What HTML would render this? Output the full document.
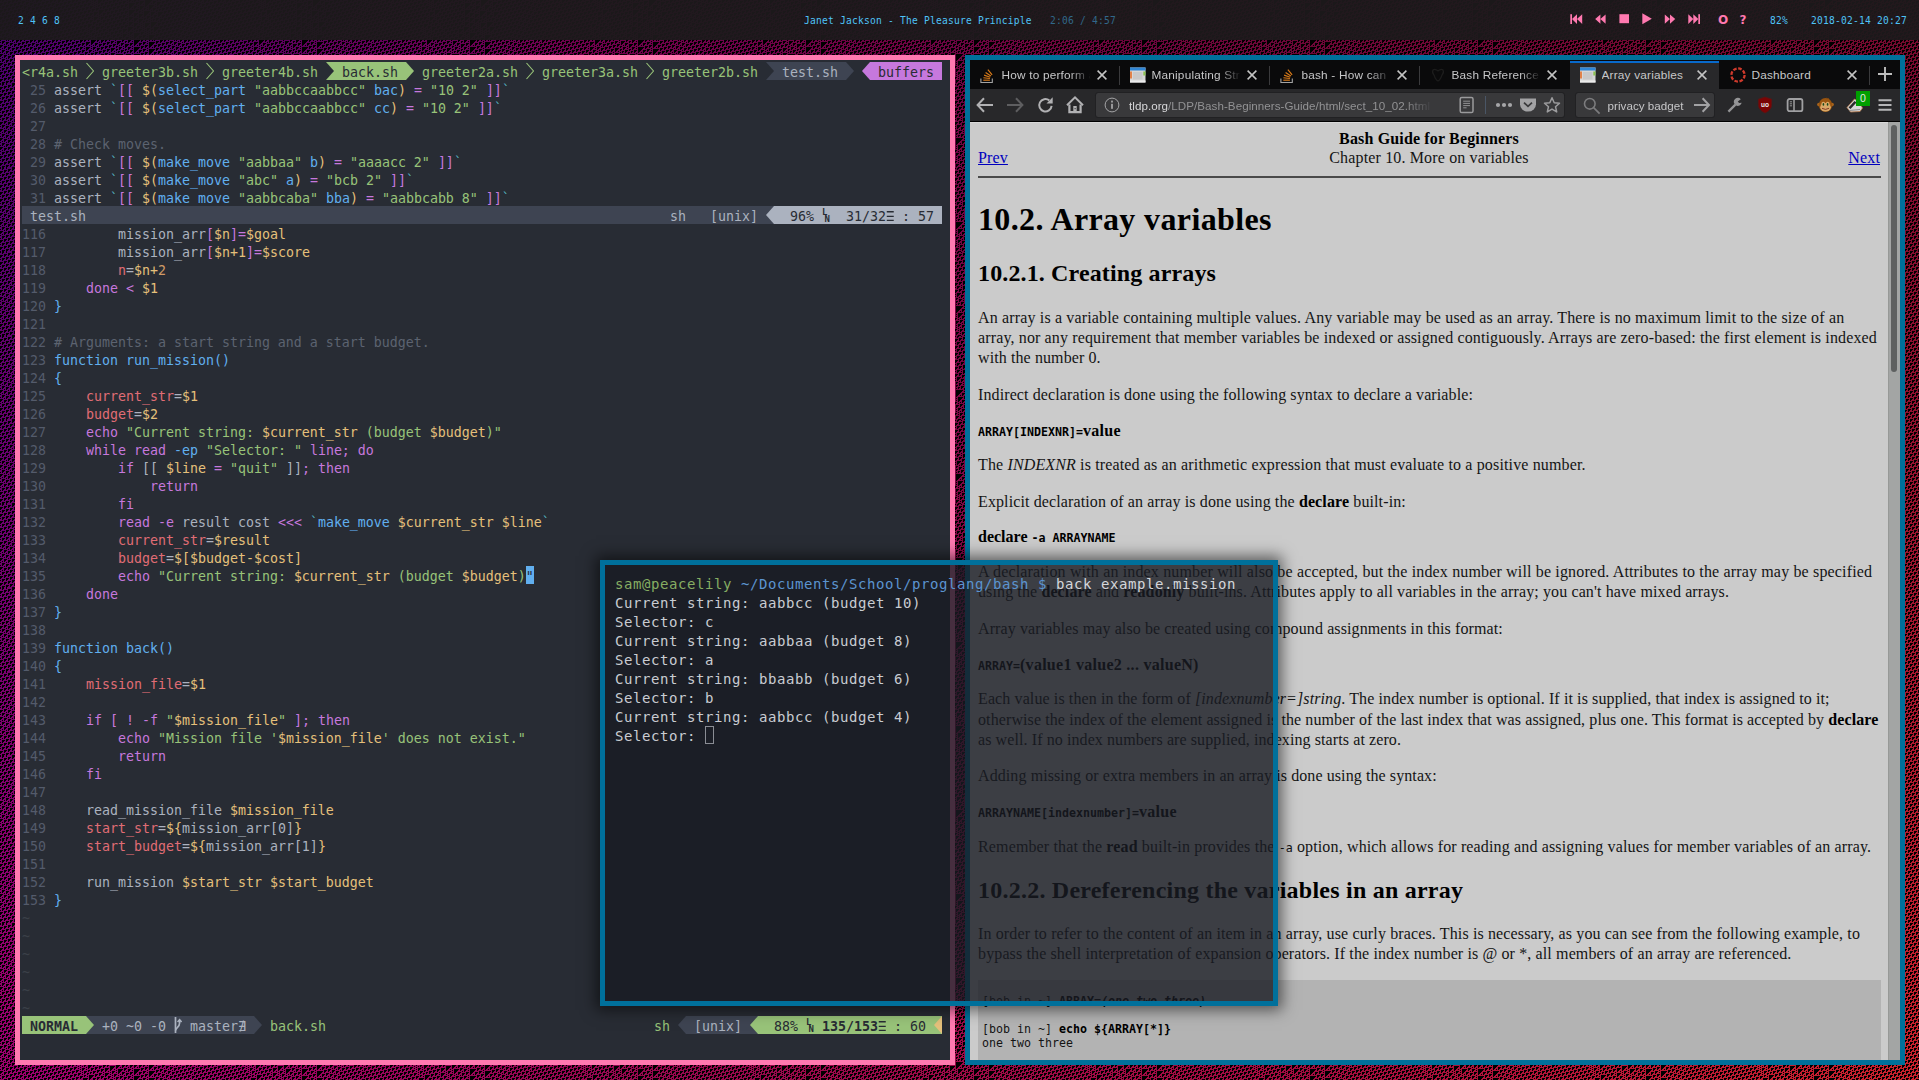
<!DOCTYPE html>
<html lang="en">
<head>
<meta charset="utf-8">
<title>desktop</title>
<style>
*{box-sizing:border-box;margin:0;padding:0}
html,body{width:1919px;height:1080px;overflow:hidden;background:#000}
body{position:relative;font-family:"Liberation Sans",sans-serif}
#wall{position:absolute;left:0;top:0;shape-rendering:crispEdges}
.abs{position:absolute}
/* top bar */
#bar{position:absolute;left:0;top:0;width:1919px;height:40px;background:rgba(29,25,28,.94);font-family:"DejaVu Sans Mono","Liberation Mono",monospace;font-size:9.6px;letter-spacing:.22px;line-height:12px;white-space:pre}
#bar span{position:absolute;top:14.5px}
#bar .ob{font:bold 12px/12px "DejaVu Sans","Liberation Sans",sans-serif;letter-spacing:0;top:13.5px}
.bl{color:#4fc3f7}.dbl{color:#31688a}.pk{color:#ff79b0}
/* windows */
#vim{position:absolute;left:15px;top:55px;width:940px;height:1010px;border:5px solid #ff79b0;background:#282c34;overflow:hidden}
#ff{position:absolute;left:965px;top:55px;width:940px;height:1010px;border:5px solid #00709b;background:#cbcbcb;overflow:hidden}
#term{position:absolute;left:600px;top:560px;width:678px;height:446px;border:5px solid #00709b;background:rgba(27,29,38,.83);box-shadow:0 0 14px 4px rgba(0,0,0,.55);overflow:hidden}
/* vim */
#vim{font-family:"DejaVu Sans Mono","Liberation Mono",monospace;font-size:13.29px;color:#abb2bf}
.vl{position:absolute;left:2px;height:20px;padding-top:2px;line-height:18px;white-space:pre}
.bx{position:absolute;height:18px}
.n{color:#545b6b}.p{color:#c678dd}.y{color:#e5c07b}.g{color:#98c379}.b{color:#61afef}.r{color:#e06c75}.c{color:#56b6c2}.o{color:#d19a66}.m{color:#5c6370}
.cur{color:#282c34}
.tg{color:#98c379}.dk{color:#282c34}.bd{font-weight:bold}
.til{color:#3b4048}
.sym{font-family:"DejaVu Sans","DejaVu Sans Mono",sans-serif}
.tri{transform:scaleX(.72);transform-origin:0 50%}
.lnsym{position:absolute;width:8px;height:18px;font:bold 9px/8px "DejaVu Sans Mono",monospace}
.lnsym i{position:absolute;left:0;top:1.5px;font-style:normal}
.lnsym b{position:absolute;left:2.6px;top:8.5px}
/* firefox */
#ff{font-family:"Liberation Sans",sans-serif;font-size:11.6px;color:#c7c7c8}
.tabs{position:absolute;left:0;top:0;width:930px;height:29px;background:#0a0a0b}
.tab{position:absolute;top:0;width:150px;height:29px}
.tab.act{background:#28282a;width:149px;box-shadow:inset 0 1px 0 #0a0a0b}
.tab.act:before{content:"";position:absolute;left:0;top:1px;width:100%;height:2px;background:#086acc}
.fav{position:absolute;left:10px;top:6.8px;width:16px;height:16px}
.tt{position:absolute;left:31.5px;top:6.5px;height:16px;line-height:16px;width:90px;white-space:nowrap;overflow:hidden;letter-spacing:.2px;font-size:11.8px}
.tt.fd{-webkit-mask-image:linear-gradient(90deg,#000 68px,transparent 89px);mask-image:linear-gradient(90deg,#000 68px,transparent 89px)}
.tx{position:absolute;left:127px;top:10px;width:10px;height:10px}
.tsep{position:absolute;top:5.5px;width:1px;height:19px;background:#3a3a3c}
.nav{position:absolute;left:0;top:29px;width:930px;height:33px;background:#28282a;border-bottom:1px solid #000}
.nav{height:33px}
.ubar{position:absolute;top:4px;height:24px;background:#39393b;border-radius:2.5px;box-shadow:0 0 0 1px rgba(20,20,22,.35)}
.ut{position:absolute;left:33px;top:3.5px;line-height:18px;white-space:nowrap;color:#929294;letter-spacing:.05px;width:322px;overflow:hidden;-webkit-mask-image:linear-gradient(90deg,#000 276px,transparent 304px);mask-image:linear-gradient(90deg,#000 276px,transparent 304px)}
.ut b{font-weight:normal;color:#d6d6d8}
.badge{position:absolute;left:886px;top:2px;width:14px;height:15px;background:#00a000;color:#e4e4e4;font-size:10.5px;line-height:15px;text-align:center}
.page{position:absolute;left:0;top:62px;width:930px;height:938px;background:#cbcbcb;box-shadow:inset 0 1px 0 #d9d9d9}
.page{font-family:"Liberation Serif",serif;font-size:16px;color:#141414}
.page b,.h1,.h2{color:#000}
.sb{position:absolute;left:918px;top:0;width:12px;height:938px;background:#a3a5a4;box-shadow:inset 1px 0 0 #979997}
.sb i{position:absolute;left:3px;top:3px;width:6px;height:247px;border-radius:3px;background:#5e6060}
.ln{position:absolute;white-space:nowrap;line-height:20px;letter-spacing:.15px;margin-top:-62px}
.ln a{color:#0000be;text-decoration:underline}
.h1{font-size:32px;font-weight:bold;line-height:40px;letter-spacing:.34px}
.h2{font-size:24px;font-weight:bold;line-height:30px;letter-spacing:.18px}
.mo{font-family:"DejaVu Sans Mono","Liberation Mono",monospace;font-size:11.63px;letter-spacing:0 !important}
.pre{font-family:"DejaVu Sans Mono","Liberation Mono",monospace;font-size:11.63px;letter-spacing:0;line-height:14px}
.hr{position:absolute;left:8px;top:54px;width:903px;height:1.5px;background:#4a4a4a}
.preb{position:absolute;left:8px;top:858px;width:903px;height:80px;background:#b3b3b3}
/* terminal */
#term{background:rgba(25,27,35,.805);font-family:"DejaVu Sans Mono","Liberation Mono",monospace;font-size:14px;letter-spacing:.572px;color:#c9ccd2}
.tl{position:absolute;left:10px;margin-top:9.5px;height:19px;line-height:19px;white-space:pre}
.tg2{color:#86ad62}.tb2{color:#5b94d0}.tw2{color:#d4d6da}
.tcur{position:absolute;left:100px;top:161px;width:9px;height:18px;border:1px solid #8a8d94}

</style>
</head>
<body>
<svg id="wall" width="1919" height="1080">
<defs>
<linearGradient id="wg" gradientUnits="userSpaceOnUse" x1="0" y1="0" x2="1919" y2="1080">
<stop offset="0" stop-color="#6a0098"/><stop offset="0.24" stop-color="#9c006c"/><stop offset="0.5" stop-color="#96084e"/><stop offset="0.76" stop-color="#a40c40"/><stop offset="1" stop-color="#cc222c"/>
</linearGradient>
<linearGradient id="wv" x1="0" y1="0" x2="0" y2="1"><stop offset="0" stop-color="#000" stop-opacity=".3"/><stop offset="1" stop-color="#000" stop-opacity="0"/></linearGradient>
<pattern id="r110" width="168" height="84" patternUnits="userSpaceOnUse"><path stroke="#000" stroke-width="1" fill="none" d="M0 0.5h1m1 0h2m2 0h1m5 0h3m1 0h2m2 0h1m5 0h1m1 0h1m3 0h2m2 0h3m1 0h2m2 0h1m5 0h3m1 0h2m2 0h3m1 0h2m2 0h1m5 0h3m1 0h2m2 0h1m5 0h3m3 0h1m1 0h2m2 0h4m1 0h2m2 0h1m5 0h3m1 0h2m2 0h1m5 0h1m1 0h2m3 0h2m2 0h1m6 0h7m5 0h1m2 0h1m5 0h2M2 1.5h1m5 0h3m1 0h2m2 0h1m5 0h3m5 0h1m1 0h1m3 0h2m2 0h1m5 0h3m1 0h2m2 0h1m3 0h2m2 0h1m5 0h3m1 0h2m2 0h1m5 0h3m1 0h2m2 0h1m3 0h1m3 0h3m2 0h1m5 0h3m1 0h2m2 0h1m5 0h3m3 0h1m2 0h1m1 0h1m5 0h4m1 0h6m2 0h3m6 0h3m1 0h2M4 2.5h3m1 0h2m2 0h1m5 0h3m1 0h2m2 0h3m5 0h1m1 0h1m5 0h3m1 0h2m2 0h1m5 0h1m1 0h1m5 0h3m1 0h2m2 0h1m5 0h3m1 0h2m2 0h1m5 0h1m3 0h1m1 0h2m5 0h3m1 0h2m2 0h1m5 0h3m1 0h2m2 0h1m8 0h3m1 0h3m2 0h5m3 0h2m2 0h4m1 0h2m2 0h1M0 3.5h3m1 0h2m2 0h1m5 0h3m1 0h2m2 0h1m3 0h2m2 0h3m5 0h3m1 0h2m2 0h1m5 0h3m5 0h3m1 0h2m2 0h1m5 0h3m1 0h2m2 0h1m5 0h3m3 0h1m3 0h1m2 0h3m1 0h2m2 0h1m5 0h3m1 0h2m2 0h1m5 0h6m1 0h2m2 0h2m3 0h4m2 0h1m1 0h1m3 0h3m2 0h1M0 4.5h2m2 0h1m5 0h3m1 0h2m2 0h1m5 0h1m1 0h1m3 0h2m2 0h3m1 0h2m2 0h1m5 0h3m1 0h2m2 0h3m1 0h2m2 0h1m5 0h3m1 0h2m2 0h1m5 0h3m1 0h2m2 0h1m3 0h1m4 0h2m2 0h1m5 0h3m1 0h2m2 0h1m5 0h3m1 0h5m2 0h1m3 0h1m2 0h1m1 0h3m7 0h1m1 0h2m5 0h3M0 5.5h1m5 0h3m1 0h2m2 0h1m5 0h3m5 0h1m1 0h1m3 0h2m2 0h1m5 0h3m1 0h2m2 0h1m3 0h2m2 0h1m5 0h3m1 0h2m2 0h1m5 0h3m1 0h2m2 0h1m5 0h1m3 0h2m1 0h1m5 0h3m1 0h2m2 0h1m5 0h3m1 0h2m2 0h4m5 0h1m6 0h2m2 0h5m3 0h1m2 0h3m1 0h2M2 6.5h3m1 0h2m2 0h1m5 0h3m1 0h2m2 0h3m5 0h1m1 0h1m5 0h3m1 0h2m2 0h1m5 0h1m1 0h1m5 0h3m1 0h2m2 0h1m5 0h3m1 0h2m2 0h1m5 0h3m3 0h1m1 0h1m4 0h3m1 0h2m2 0h1m5 0h3m1 0h2m2 0h1m3 0h3m2 0h3m3 0h4m1 0h1m3 0h4m2 0h1m4 0h2m2 0h1M0 7.5h1m1 0h2m2 0h1m5 0h3m1 0h2m2 0h1m3 0h2m2 0h3m5 0h3m1 0h2m2 0h1m5 0h3m5 0h3m1 0h2m2 0h1m5 0h3m1 0h2m2 0h1m5 0h3m1 0h2m2 0h1m5 0h2m1 0h2m2 0h1m5 0h3m1 0h2m2 0h1m5 0h1m1 0h2m3 0h2m2 0h1m1 0h3m4 0h1m1 0h3m5 0h2m1 0h1m5 0h2M2 8.5h1m5 0h3m1 0h2m2 0h1m5 0h1m1 0h1m3 0h2m2 0h3m1 0h2m2 0h1m5 0h3m1 0h2m2 0h3m1 0h2m2 0h1m5 0h3m1 0h2m2 0h1m5 0h3m1 0h2m2 0h1m5 0h3m1 0h1m2 0h1m5 0h3m1 0h2m2 0h1m5 0h3m3 0h1m2 0h1m1 0h1m5 0h2m2 0h2m3 0h2m2 0h3m1 0h1m4 0h3m1 0h2M4 9.5h3m1 0h2m2 0h1m5 0h3m5 0h1m1 0h1m3 0h2m2 0h1m5 0h3m1 0h2m2 0h1m3 0h2m2 0h1m5 0h3m1 0h2m2 0h1m5 0h3m1 0h2m2 0h1m5 0h3m1 0h2m7 0h3m1 0h2m2 0h1m5 0h3m1 0h2m2 0h1m8 0h3m1 0h1m3 0h1m2 0h1m1 0h1m3 0h2m4 0h2m1 0h2m2 0h1M0 10.5h3m1 0h2m2 0h1m5 0h3m1 0h2m2 0h3m5 0h1m1 0h1m5 0h3m1 0h2m2 0h1m5 0h1m1 0h1m5 0h3m1 0h2m2 0h1m5 0h3m1 0h2m2 0h1m5 0h3m1 0h2m2 0h1m2 0h5m1 0h2m2 0h1m5 0h3m1 0h2m2 0h1m5 0h6m1 0h2m4 0h1m8 0h1m1 0h1m2 0h2m1 0h1m2 0h1M0 11.5h2m2 0h1m5 0h3m1 0h2m2 0h1m3 0h2m2 0h3m5 0h3m1 0h2m2 0h1m5 0h3m5 0h3m1 0h2m2 0h1m5 0h3m1 0h2m2 0h1m5 0h3m1 0h2m2 0h1m6 0h4m2 0h1m5 0h3m1 0h2m2 0h1m5 0h3m1 0h5m2 0h1m2 0h2m3 0h6m6 0h1m7 0h3M0 12.5h1m5 0h3m1 0h2m2 0h1m5 0h1m1 0h1m3 0h2m2 0h3m1 0h2m2 0h1m5 0h3m1 0h2m2 0h3m1 0h2m2 0h1m5 0h3m1 0h2m2 0h1m5 0h3m1 0h2m2 0h1m5 0h4m1 0h3m5 0h3m1 0h2m2 0h1m5 0h3m1 0h2m2 0h4m6 0h1m2 0h1m1 0h5m2 0h4m3 0h5m1 0h2M2 13.5h3m1 0h2m2 0h1m5 0h3m5 0h1m1 0h1m3 0h2m2 0h1m5 0h3m1 0h2m2 0h1m3 0h2m2 0h1m5 0h3m1 0h2m2 0h1m5 0h3m1 0h2m2 0h1m5 0h3m1 0h3m2 0h2m2 0h3m1 0h2m2 0h1m5 0h3m1 0h2m2 0h1m3 0h3m2 0h4m6 0h4m3 0h3m2 0h1m1 0h4m2 0h1M0 14.5h1m1 0h2m2 0h1m5 0h3m1 0h2m2 0h3m5 0h1m1 0h1m5 0h3m1 0h2m2 0h1m5 0h1m1 0h1m5 0h3m1 0h2m2 0h1m5 0h3m1 0h2m2 0h1m5 0h3m1 0h2m2 0h2m3 0h1m3 0h2m2 0h1m5 0h3m1 0h2m2 0h1m5 0h1m1 0h2m3 0h3m2 0h4m1 0h3m2 0h1m1 0h2m5 0h3m5 0h2M2 15.5h1m5 0h3m1 0h2m2 0h1m3 0h2m2 0h3m5 0h3m1 0h2m2 0h1m5 0h3m5 0h3m1 0h2m2 0h1m5 0h3m1 0h2m2 0h1m5 0h3m1 0h2m2 0h1m3 0h1m2 0h1m3 0h1m1 0h1m5 0h3m1 0h2m2 0h1m5 0h3m3 0h1m2 0h1m1 0h2m3 0h3m2 0h2m5 0h1m2 0h3m1 0h2m2 0h3m1 0h2M4 16.5h3m1 0h2m2 0h1m5 0h1m1 0h1m3 0h2m2 0h3m1 0h2m2 0h1m5 0h3m1 0h2m2 0h3m1 0h2m2 0h1m5 0h3m1 0h2m2 0h1m5 0h3m1 0h2m2 0h1m5 0h1m6 0h1m5 0h3m1 0h2m2 0h1m5 0h3m1 0h2m2 0h1m6 0h1m2 0h1m1 0h2m3 0h1m2 0h3m4 0h2m2 0h1m3 0h2m2 0h1M0 17.5h3m1 0h2m2 0h1m5 0h3m5 0h1m1 0h1m3 0h2m2 0h1m5 0h3m1 0h2m2 0h1m3 0h2m2 0h1m5 0h3m1 0h2m2 0h1m5 0h3m1 0h2m2 0h1m5 0h3m3 0h4m3 0h3m1 0h2m2 0h1m5 0h3m1 0h2m2 0h1m5 0h4m6 0h1m2 0h1m4 0h2m2 0h2m1 0h1m5 0h1m1 0h1M0 18.5h2m2 0h1m5 0h3m1 0h2m2 0h3m5 0h1m1 0h1m5 0h3m1 0h2m2 0h1m5 0h1m1 0h1m5 0h3m1 0h2m2 0h1m5 0h3m1 0h2m2 0h1m5 0h3m1 0h2m2 0h1m1 0h3m2 0h1m1 0h2m2 0h1m5 0h3m1 0h2m2 0h1m5 0h3m1 0h3m2 0h4m6 0h2m1 0h1m3 0h1m4 0h3m5 0h3M0 19.5h1m5 0h3m1 0h2m2 0h1m3 0h2m2 0h3m5 0h3m1 0h2m2 0h1m5 0h3m5 0h3m1 0h2m2 0h1m5 0h3m1 0h2m2 0h1m5 0h3m1 0h2m2 0h1m5 0h2m5 0h1m5 0h3m1 0h2m2 0h1m5 0h3m1 0h2m2 0h2m3 0h3m2 0h4m1 0h1m4 0h1m3 0h2m1 0h2m2 0h3m1 0h2M2 20.5h3m1 0h2m2 0h1m5 0h1m1 0h1m3 0h2m2 0h3m1 0h2m2 0h1m5 0h3m1 0h2m2 0h3m1 0h2m2 0h1m5 0h3m1 0h2m2 0h1m5 0h3m1 0h2m2 0h1m5 0h3m1 0h1m2 0h3m3 0h3m1 0h2m2 0h1m5 0h3m1 0h2m2 0h1m3 0h1m2 0h1m1 0h2m3 0h3m4 0h2m3 0h1m1 0h1m2 0h1m3 0h2m2 0h1M0 21.5h1m1 0h2m2 0h1m5 0h3m5 0h1m1 0h1m3 0h2m2 0h1m5 0h3m1 0h2m2 0h1m3 0h2m2 0h1m5 0h3m1 0h2m2 0h1m5 0h3m1 0h2m2 0h1m5 0h3m1 0h2m5 0h2m2 0h1m1 0h2m2 0h1m5 0h3m1 0h2m2 0h1m5 0h1m6 0h1m2 0h1m1 0h2m2 0h2m1 0h1m2 0h1m8 0h1m1 0h1m5 0h2M2 22.5h1m5 0h3m1 0h2m2 0h3m5 0h1m1 0h1m5 0h3m1 0h2m2 0h1m5 0h1m1 0h1m5 0h3m1 0h2m2 0h1m5 0h3m1 0h2m2 0h1m5 0h3m1 0h2m2 0h1m2 0h3m1 0h1m5 0h1m5 0h3m1 0h2m2 0h1m5 0h3m3 0h4m6 0h1m3 0h1m7 0h6m5 0h3m1 0h2M4 23.5h3m1 0h2m2 0h1m3 0h2m2 0h3m5 0h3m1 0h2m2 0h1m5 0h3m5 0h3m1 0h2m2 0h1m5 0h3m1 0h2m2 0h1m5 0h3m1 0h2m2 0h1m6 0h2m4 0h3m3 0h3m1 0h2m2 0h1m5 0h3m1 0h2m2 0h1m1 0h3m2 0h4m3 0h1m3 0h5m1 0h5m2 0h3m1 0h2m2 0h1M0 24.5h3m1 0h2m2 0h1m5 0h1m1 0h1m3 0h2m2 0h3m1 0h2m2 0h1m5 0h3m1 0h2m2 0h3m1 0h2m2 0h1m5 0h3m1 0h2m2 0h1m5 0h3m1 0h2m2 0h1m5 0h4m1 0h1m2 0h2m1 0h2m2 0h1m1 0h2m2 0h1m5 0h3m1 0h2m2 0h1m5 0h2m3 0h3m2 0h1m3 0h1m1 0h4m2 0h4m3 0h2m2 0h1M0 25.5h2m2 0h1m5 0h3m5 0h1m1 0h1m3 0h2m2 0h1m5 0h3m1 0h2m2 0h1m3 0h2m2 0h1m5 0h3m1 0h2m2 0h1m5 0h3m1 0h2m2 0h1m5 0h3m1 0h3m5 0h1m2 0h1m5 0h1m5 0h3m1 0h2m2 0h1m5 0h3m1 0h1m2 0h1m1 0h2m5 0h1m3 0h3m3 0h3m2 0h1m1 0h1m5 0h3M0 26.5h1m5 0h3m1 0h2m2 0h3m5 0h1m1 0h1m5 0h3m1 0h2m2 0h1m5 0h1m1 0h1m5 0h3m1 0h2m2 0h1m5 0h3m1 0h2m2 0h1m5 0h3m1 0h2m2 0h2m2 0h3m6 0h3m3 0h3m1 0h2m2 0h1m5 0h3m1 0h2m7 0h1m2 0h3m3 0h1m1 0h2m2 0h1m1 0h2m7 0h3m1 0h2M2 27.5h3m1 0h2m2 0h1m3 0h2m2 0h3m5 0h3m1 0h2m2 0h1m5 0h3m5 0h3m1 0h2m2 0h1m5 0h3m1 0h2m2 0h1m5 0h3m1 0h2m2 0h1m3 0h1m3 0h2m2 0h4m1 0h2m2 0h1m1 0h2m2 0h1m5 0h3m1 0h2m2 0h1m2 0h5m4 0h2m2 0h1m3 0h1m5 0h1m2 0h5m1 0h2m2 0h1M0 28.5h1m1 0h2m2 0h1m5 0h1m1 0h1m3 0h2m2 0h3m1 0h2m2 0h1m5 0h3m1 0h2m2 0h3m1 0h2m2 0h1m5 0h3m1 0h2m2 0h1m5 0h3m1 0h2m2 0h1m5 0h1m3 0h1m1 0h1m3 0h3m2 0h1m5 0h1m5 0h3m1 0h2m2 0h1m6 0h4m2 0h2m1 0h1m5 0h1m3 0h3m4 0h4m2 0h1m5 0h2M2 29.5h1m5 0h3m5 0h1m1 0h1m3 0h2m2 0h1m5 0h3m1 0h2m2 0h1m3 0h2m2 0h1m5 0h3m1 0h2m2 0h1m5 0h3m1 0h2m2 0h1m5 0h3m3 0h1m5 0h1m1 0h2m5 0h3m3 0h3m1 0h2m2 0h1m5 0h4m1 0h3m3 0h1m4 0h3m3 0h1m1 0h2m2 0h2m1 0h3m5 0h3m1 0h2M4 30.5h3m1 0h2m2 0h3m5 0h1m1 0h1m5 0h3m1 0h2m2 0h1m5 0h1m1 0h1m5 0h3m1 0h2m2 0h1m5 0h3m1 0h2m2 0h1m5 0h3m1 0h2m2 0h1m3 0h3m3 0h1m2 0h3m1 0h2m2 0h1m1 0h2m2 0h1m5 0h3m1 0h3m2 0h2m2 0h1m3 0h2m1 0h2m2 0h1m3 0h1m3 0h1m2 0h2m2 0h3m1 0h2m2 0h1M0 31.5h3m1 0h2m2 0h1m3 0h2m2 0h3m5 0h3m1 0h2m2 0h1m5 0h3m5 0h3m1 0h2m2 0h1m5 0h3m1 0h2m2 0h1m5 0h3m1 0h2m2 0h1m5 0h1m1 0h2m2 0h1m4 0h2m2 0h1m5 0h1m5 0h3m1 0h2m2 0h2m3 0h1m5 0h1m1 0h1m2 0h1m5 0h1m3 0h1m4 0h1m3 0h2m2 0h1M0 32.5h2m2 0h1m5 0h1m1 0h1m3 0h2m2 0h3m1 0h2m2 0h1m5 0h3m1 0h2m2 0h3m1 0h2m2 0h1m5 0h3m1 0h2m2 0h1m5 0h3m1 0h2m2 0h1m5 0h3m3 0h1m5 0h2m1 0h1m5 0h3m3 0h3m1 0h2m2 0h1m3 0h1m2 0h1m3 0h3m8 0h3m3 0h1m3 0h2m3 0h1m1 0h1m5 0h3M0 33.5h1m5 0h3m5 0h1m1 0h1m3 0h2m2 0h1m5 0h3m1 0h2m2 0h1m3 0h2m2 0h1m5 0h3m1 0h2m2 0h1m5 0h3m1 0h2m2 0h1m5 0h3m1 0h2m2 0h1m3 0h3m1 0h1m4 0h3m1 0h2m2 0h1m1 0h2m2 0h1m5 0h1m6 0h1m1 0h2m2 0h6m1 0h2m2 0h1m3 0h1m1 0h1m2 0h1m5 0h3m1 0h2M2 34.5h3m1 0h2m2 0h3m5 0h1m1 0h1m5 0h3m1 0h2m2 0h1m5 0h1m1 0h1m5 0h3m1 0h2m2 0h1m5 0h3m1 0h2m2 0h1m5 0h3m1 0h2m2 0h1m5 0h1m1 0h2m4 0h2m1 0h2m2 0h1m5 0h1m5 0h3m3 0h4m3 0h1m3 0h5m2 0h1m5 0h1m8 0h3m1 0h2m2 0h1M0 35.5h1m1 0h2m2 0h1m3 0h2m2 0h3m5 0h3m1 0h2m2 0h1m5 0h3m5 0h3m1 0h2m2 0h1m5 0h3m1 0h2m2 0h1m5 0h3m1 0h2m2 0h1m5 0h3m3 0h1m2 0h2m1 0h1m2 0h1m5 0h3m3 0h3m1 0h2m2 0h1m1 0h3m2 0h1m3 0h1m1 0h4m5 0h3m3 0h6m1 0h2m2 0h1m5 0h2M2 36.5h1m5 0h1m1 0h1m3 0h2m2 0h3m1 0h2m2 0h1m5 0h3m1 0h2m2 0h3m1 0h2m2 0h1m5 0h3m1 0h2m2 0h1m5 0h3m1 0h2m2 0h1m5 0h3m1 0h2m2 0h1m4 0h1m7 0h3m1 0h2m2 0h1m1 0h2m2 0h1m5 0h2m5 0h1m3 0h3m2 0h3m1 0h2m2 0h1m1 0h5m2 0h1m5 0h3m1 0h2M4 37.5h3m5 0h1m1 0h1m3 0h2m2 0h1m5 0h3m1 0h2m2 0h1m3 0h2m2 0h1m5 0h3m1 0h2m2 0h1m5 0h3m1 0h2m2 0h1m5 0h3m1 0h2m2 0h1m5 0h2m3 0h5m1 0h2m2 0h1m5 0h1m5 0h3m1 0h1m2 0h3m3 0h1m1 0h2m3 0h2m2 0h1m5 0h4m5 0h3m1 0h2m2 0h1M0 38.5h3m1 0h2m2 0h3m5 0h1m1 0h1m5 0h3m1 0h2m2 0h1m5 0h1m1 0h1m5 0h3m1 0h2m2 0h1m5 0h3m1 0h2m2 0h1m5 0h3m1 0h2m2 0h1m5 0h3m1 0h1m2 0h1m1 0h4m2 0h1m5 0h3m3 0h3m1 0h2m5 0h2m2 0h1m3 0h1m2 0h1m1 0h1m5 0h3m1 0h3m2 0h3m1 0h2m2 0h1M0 39.5h2m2 0h1m3 0h2m2 0h3m5 0h3m1 0h2m2 0h1m5 0h3m5 0h3m1 0h2m2 0h1m5 0h3m1 0h2m2 0h1m5 0h3m1 0h2m2 0h1m5 0h3m1 0h2m7 0h3m5 0h3m1 0h2m2 0h1m1 0h2m2 0h1m2 0h3m1 0h1m5 0h1m8 0h3m1 0h2m2 0h2m3 0h2m2 0h1m5 0h3M0 40.5h1m5 0h1m1 0h1m3 0h2m2 0h3m1 0h2m2 0h1m5 0h3m1 0h2m2 0h3m1 0h2m2 0h1m5 0h3m1 0h2m2 0h1m5 0h3m1 0h2m2 0h1m5 0h3m1 0h2m2 0h1m2 0h5m1 0h2m2 0h3m1 0h2m2 0h1m5 0h1m6 0h2m4 0h3m3 0h6m1 0h2m2 0h1m3 0h1m2 0h1m1 0h1m5 0h3m1 0h2M2 41.5h3m5 0h1m1 0h1m3 0h2m2 0h1m5 0h3m1 0h2m2 0h1m3 0h2m2 0h1m5 0h3m1 0h2m2 0h1m5 0h3m1 0h2m2 0h1m5 0h3m1 0h2m2 0h1m6 0h4m2 0h1m3 0h2m2 0h1m5 0h3m3 0h4m1 0h1m2 0h2m1 0h2m2 0h1m1 0h5m2 0h1m5 0h1m8 0h3m1 0h2m2 0h1M0 42.5h1m1 0h2m2 0h3m5 0h1m1 0h1m5 0h3m1 0h2m2 0h1m5 0h1m1 0h1m5 0h3m1 0h2m2 0h1m5 0h3m1 0h2m2 0h1m5 0h3m1 0h2m2 0h1m5 0h4m1 0h3m5 0h1m1 0h1m5 0h3m1 0h2m2 0h1m1 0h3m5 0h1m2 0h1m5 0h4m5 0h3m3 0h6m1 0h2m2 0h1m5 0h2M2 43.5h1m3 0h2m2 0h3m5 0h3m1 0h2m2 0h1m5 0h3m5 0h3m1 0h2m2 0h1m5 0h3m1 0h2m2 0h1m5 0h3m1 0h2m2 0h1m5 0h3m1 0h3m2 0h2m2 0h3m5 0h3m1 0h2m2 0h1m5 0h2m2 0h3m6 0h3m1 0h3m2 0h3m1 0h2m2 0h1m1 0h5m2 0h1m5 0h3m1 0h2M4 44.5h1m1 0h1m3 0h2m2 0h3m1 0h2m2 0h1m5 0h3m1 0h2m2 0h3m1 0h2m2 0h1m5 0h3m1 0h2m2 0h1m5 0h3m1 0h2m2 0h1m5 0h3m1 0h2m2 0h2m3 0h1m3 0h2m2 0h3m1 0h2m2 0h1m5 0h3m1 0h1m3 0h2m2 0h4m1 0h2m2 0h2m3 0h2m2 0h1m5 0h4m5 0h3m1 0h2m2 0h1M0 45.5h3m5 0h1m1 0h1m3 0h2m2 0h1m5 0h3m1 0h2m2 0h1m3 0h2m2 0h1m5 0h3m1 0h2m2 0h1m5 0h3m1 0h2m2 0h1m5 0h3m1 0h2m2 0h1m3 0h1m2 0h1m3 0h1m1 0h1m3 0h2m2 0h1m5 0h3m1 0h2m4 0h1m1 0h1m3 0h3m2 0h1m3 0h1m2 0h1m1 0h1m5 0h3m1 0h3m2 0h3m1 0h2m2 0h1M0 46.5h2m2 0h3m5 0h1m1 0h1m5 0h3m1 0h2m2 0h1m5 0h1m1 0h1m5 0h3m1 0h2m2 0h1m5 0h3m1 0h2m2 0h1m5 0h3m1 0h2m2 0h1m5 0h1m6 0h1m5 0h1m1 0h1m5 0h3m1 0h2m2 0h1m2 0h2m5 0h1m1 0h2m5 0h1m8 0h3m1 0h2m2 0h2m3 0h2m2 0h1m5 0h3M0 47.5h1m3 0h2m2 0h3m5 0h3m1 0h2m2 0h1m5 0h3m5 0h3m1 0h2m2 0h1m5 0h3m1 0h2m2 0h1m5 0h3m1 0h2m2 0h1m5 0h3m3 0h4m3 0h3m5 0h3m1 0h2m2 0h1m6 0h1m2 0h3m3 0h1m2 0h3m3 0h6m1 0h2m2 0h1m3 0h1m2 0h1m1 0h1m5 0h3m1 0h2M2 48.5h1m1 0h1m3 0h2m2 0h3m1 0h2m2 0h1m5 0h3m1 0h2m2 0h3m1 0h2m2 0h1m5 0h3m1 0h2m2 0h1m5 0h3m1 0h2m2 0h1m5 0h3m1 0h2m2 0h1m1 0h3m2 0h1m1 0h2m2 0h3m1 0h2m2 0h1m5 0h4m4 0h2m2 0h1m4 0h2m2 0h1m1 0h5m2 0h1m5 0h1m8 0h3m1 0h2m2 0h1M0 49.5h1m5 0h1m1 0h1m3 0h2m2 0h1m5 0h3m1 0h2m2 0h1m3 0h2m2 0h1m5 0h3m1 0h2m2 0h1m5 0h3m1 0h2m2 0h1m5 0h3m1 0h2m2 0h1m5 0h2m5 0h1m3 0h2m2 0h1m5 0h3m1 0h3m2 0h2m1 0h1m5 0h2m1 0h1m5 0h4m5 0h3m3 0h6m1 0h2m2 0h1m5 0h2M2 50.5h3m5 0h1m1 0h1m5 0h3m1 0h2m2 0h1m5 0h1m1 0h1m5 0h3m1 0h2m2 0h1m5 0h3m1 0h2m2 0h1m5 0h3m1 0h2m2 0h1m5 0h3m1 0h1m2 0h3m3 0h1m1 0h1m5 0h3m1 0h2m2 0h2m3 0h1m4 0h3m1 0h1m4 0h3m1 0h3m2 0h3m1 0h2m2 0h1m1 0h5m2 0h1m5 0h3m1 0h2M2 51.5h2m2 0h3m5 0h3m1 0h2m2 0h1m5 0h3m5 0h3m1 0h2m2 0h1m5 0h3m1 0h2m2 0h1m5 0h3m1 0h2m2 0h1m5 0h3m1 0h2m5 0h2m2 0h1m5 0h3m1 0h2m2 0h1m3 0h1m2 0h1m3 0h2m1 0h2m4 0h2m1 0h2m2 0h2m3 0h2m2 0h1m5 0h4m5 0h3m1 0h2m2 0h1M0 52.5h1m1 0h1m3 0h2m2 0h3m1 0h2m2 0h1m5 0h3m1 0h2m2 0h3m1 0h2m2 0h1m5 0h3m1 0h2m2 0h1m5 0h3m1 0h2m2 0h1m5 0h3m1 0h2m2 0h1m2 0h3m1 0h1m5 0h3m1 0h2m2 0h1m5 0h1m6 0h1m1 0h1m2 0h1m2 0h2m1 0h1m2 0h1m3 0h1m2 0h1m1 0h1m5 0h3m1 0h3m2 0h3m1 0h2m2 0h1M4 53.5h1m1 0h1m3 0h2m2 0h1m5 0h3m1 0h2m2 0h1m3 0h2m2 0h1m5 0h3m1 0h2m2 0h1m5 0h3m1 0h2m2 0h1m5 0h3m1 0h2m2 0h1m6 0h2m4 0h3m1 0h2m2 0h1m5 0h3m3 0h4m9 0h1m7 0h1m8 0h3m1 0h2m2 0h2m3 0h2m2 0h1m5 0h3M0 54.5h3m5 0h1m1 0h1m5 0h3m1 0h2m2 0h1m5 0h1m1 0h1m5 0h3m1 0h2m2 0h1m5 0h3m1 0h2m2 0h1m5 0h3m1 0h2m2 0h1m5 0h4m1 0h1m2 0h2m1 0h2m2 0h1m5 0h3m1 0h2m2 0h1m1 0h3m2 0h7m3 0h5m3 0h6m1 0h2m2 0h1m3 0h1m2 0h1m1 0h1m5 0h3m1 0h2M0 55.5h2m2 0h3m5 0h3m1 0h2m2 0h1m5 0h3m5 0h3m1 0h2m2 0h1m5 0h3m1 0h2m2 0h1m5 0h3m1 0h2m2 0h1m5 0h3m1 0h3m5 0h1m2 0h1m5 0h3m1 0h2m2 0h1m5 0h2m3 0h6m2 0h1m1 0h4m2 0h1m1 0h5m2 0h1m5 0h1m8 0h3m1 0h2m2 0h1M0 56.5h1m3 0h2m2 0h3m1 0h2m2 0h1m5 0h3m1 0h2m2 0h3m1 0h2m2 0h1m5 0h3m1 0h2m2 0h1m5 0h3m1 0h2m2 0h1m5 0h3m1 0h2m2 0h2m2 0h3m6 0h3m1 0h2m2 0h1m5 0h3m1 0h1m2 0h1m1 0h5m5 0h3m5 0h4m5 0h3m3 0h6m1 0h2m2 0h1m5 0h1M2 57.5h1m1 0h1m3 0h2m2 0h1m5 0h3m1 0h2m2 0h1m3 0h2m2 0h1m5 0h3m1 0h2m2 0h1m5 0h3m1 0h2m2 0h1m5 0h3m1 0h2m2 0h1m3 0h1m3 0h2m2 0h4m1 0h2m2 0h1m5 0h3m1 0h2m7 0h4m2 0h3m1 0h2m2 0h3m1 0h3m2 0h3m1 0h2m2 0h1m1 0h5m2 0h1m5 0h3M0 58.5h1m5 0h1m1 0h1m5 0h3m1 0h2m2 0h1m5 0h1m1 0h1m5 0h3m1 0h2m2 0h1m5 0h3m1 0h2m2 0h1m5 0h3m1 0h2m2 0h1m5 0h1m3 0h1m1 0h1m3 0h3m2 0h1m5 0h3m1 0h2m2 0h1m2 0h5m1 0h3m3 0h2m2 0h1m3 0h2m2 0h2m3 0h2m2 0h1m5 0h4m5 0h3m1 0h2m2 0h2M2 59.5h3m5 0h3m1 0h2m2 0h1m5 0h3m5 0h3m1 0h2m2 0h1m5 0h3m1 0h2m2 0h1m5 0h3m1 0h2m2 0h1m5 0h3m3 0h1m5 0h1m1 0h2m5 0h3m1 0h2m2 0h1m6 0h4m2 0h2m2 0h1m1 0h1m5 0h1m1 0h1m3 0h1m2 0h1m1 0h1m5 0h3m1 0h3m2 0h3m1 0h2m2 0h1m3 0h2M2 60.5h2m2 0h3m1 0h2m2 0h1m5 0h3m1 0h2m2 0h3m1 0h2m2 0h1m5 0h3m1 0h2m2 0h1m5 0h3m1 0h2m2 0h1m5 0h3m1 0h2m2 0h1m3 0h3m3 0h1m2 0h3m1 0h2m2 0h1m5 0h4m1 0h3m3 0h1m7 0h3m5 0h1m8 0h3m1 0h2m2 0h2m3 0h2m2 0h1m5 0h1m1 0h1M0 61.5h1m1 0h1m3 0h2m2 0h1m5 0h3m1 0h2m2 0h1m3 0h2m2 0h1m5 0h3m1 0h2m2 0h1m5 0h3m1 0h2m2 0h1m5 0h3m1 0h2m2 0h1m5 0h1m1 0h2m2 0h1m4 0h2m2 0h1m5 0h3m1 0h3m2 0h2m2 0h1m3 0h5m1 0h2m2 0h3m3 0h6m1 0h2m2 0h1m3 0h1m2 0h1m1 0h1m5 0h3M4 62.5h1m1 0h1m5 0h3m1 0h2m2 0h1m5 0h1m1 0h1m5 0h3m1 0h2m2 0h1m5 0h3m1 0h2m2 0h1m5 0h3m1 0h2m2 0h1m5 0h3m3 0h1m5 0h2m1 0h1m5 0h3m1 0h2m2 0h2m3 0h1m5 0h1m1 0h4m2 0h1m3 0h2m2 0h1m1 0h5m2 0h1m5 0h1m8 0h3m1 0h2m2 0h3M0 63.5h3m5 0h3m1 0h2m2 0h1m5 0h3m5 0h3m1 0h2m2 0h1m5 0h3m1 0h2m2 0h1m5 0h3m1 0h2m2 0h1m5 0h3m1 0h2m2 0h1m3 0h3m1 0h1m4 0h3m1 0h2m2 0h1m3 0h1m2 0h1m3 0h3m3 0h3m5 0h1m1 0h1m5 0h4m5 0h3m3 0h6m1 0h2m2 0h1m3 0h2M0 64.5h2m2 0h3m1 0h2m2 0h1m5 0h3m1 0h2m2 0h3m1 0h2m2 0h1m5 0h3m1 0h2m2 0h1m5 0h3m1 0h2m2 0h1m5 0h3m1 0h2m2 0h1m5 0h1m1 0h2m4 0h2m1 0h2m2 0h1m5 0h1m6 0h1m1 0h2m2 0h1m1 0h2m2 0h3m5 0h3m1 0h3m2 0h3m1 0h2m2 0h1m1 0h5m2 0h1m5 0h1m1 0h1M0 65.5h1m3 0h2m2 0h1m5 0h3m1 0h2m2 0h1m3 0h2m2 0h1m5 0h3m1 0h2m2 0h1m5 0h3m1 0h2m2 0h1m5 0h3m1 0h2m2 0h1m5 0h3m3 0h1m2 0h2m1 0h1m2 0h1m5 0h3m3 0h4m3 0h1m5 0h1m3 0h2m2 0h3m1 0h2m2 0h2m3 0h2m2 0h1m5 0h4m5 0h3m5 0h1M2 66.5h1m1 0h1m5 0h3m1 0h2m2 0h1m5 0h1m1 0h1m5 0h3m1 0h2m2 0h1m5 0h3m1 0h2m2 0h1m5 0h3m1 0h2m2 0h1m5 0h3m1 0h2m2 0h1m4 0h1m7 0h3m1 0h2m2 0h1m1 0h3m2 0h1m3 0h3m3 0h1m1 0h1m3 0h2m2 0h1m3 0h1m2 0h1m1 0h1m5 0h3m1 0h3m2 0h3m1 0h2m2 0h3M0 67.5h1m5 0h3m1 0h2m2 0h1m5 0h3m5 0h3m1 0h2m2 0h1m5 0h3m1 0h2m2 0h1m5 0h3m1 0h2m2 0h1m5 0h3m1 0h2m2 0h1m5 0h2m3 0h5m1 0h2m2 0h1m5 0h2m5 0h1m1 0h2m2 0h1m5 0h1m1 0h1m5 0h1m8 0h3m1 0h2m2 0h2m3 0h2m2 0h1m3 0h2m2 0h2M2 68.5h3m1 0h2m2 0h1m5 0h3m1 0h2m2 0h3m1 0h2m2 0h1m5 0h3m1 0h2m2 0h1m5 0h3m1 0h2m2 0h1m5 0h3m1 0h2m2 0h1m5 0h3m1 0h1m2 0h1m1 0h4m2 0h1m5 0h3m1 0h1m2 0h3m3 0h1m5 0h3m5 0h3m3 0h6m1 0h2m2 0h1m3 0h1m2 0h1m1 0h1m5 0h1m1 0h1m3 0h2M2 69.5h2m2 0h1m5 0h3m1 0h2m2 0h1m3 0h2m2 0h1m5 0h3m1 0h2m2 0h1m5 0h3m1 0h2m2 0h1m5 0h3m1 0h2m2 0h1m5 0h3m1 0h2m7 0h3m5 0h3m1 0h2m5 0h2m2 0h1m3 0h3m1 0h2m2 0h3m1 0h2m2 0h1m1 0h5m2 0h1m5 0h1m8 0h3m5 0h1m1 0h1M0 70.5h1m1 0h1m5 0h3m1 0h2m2 0h1m5 0h1m1 0h1m5 0h3m1 0h2m2 0h1m5 0h3m1 0h2m2 0h1m5 0h3m1 0h2m2 0h1m5 0h3m1 0h2m2 0h1m2 0h5m1 0h2m2 0h3m1 0h2m2 0h1m2 0h3m1 0h1m5 0h1m1 0h2m2 0h1m3 0h2m2 0h1m5 0h4m5 0h3m3 0h6m1 0h2m2 0h3M4 71.5h3m1 0h2m2 0h1m5 0h3m5 0h3m1 0h2m2 0h1m5 0h3m1 0h2m2 0h1m5 0h3m1 0h2m2 0h1m5 0h3m1 0h2m2 0h1m6 0h4m2 0h1m3 0h2m2 0h1m6 0h2m4 0h3m3 0h1m5 0h1m1 0h1m5 0h3m1 0h3m2 0h3m1 0h2m2 0h1m1 0h5m2 0h1m3 0h2m2 0h3M0 72.5h3m1 0h2m2 0h1m5 0h3m1 0h2m2 0h3m1 0h2m2 0h1m5 0h3m1 0h2m2 0h1m5 0h3m1 0h2m2 0h1m5 0h3m1 0h2m2 0h1m5 0h4m1 0h3m5 0h1m1 0h1m5 0h4m1 0h1m2 0h2m1 0h2m2 0h1m3 0h3m5 0h3m1 0h2m2 0h2m3 0h2m2 0h1m5 0h4m5 0h1m1 0h1m3 0h2M0 73.5h2m2 0h1m5 0h3m1 0h2m2 0h1m3 0h2m2 0h1m5 0h3m1 0h2m2 0h1m5 0h3m1 0h2m2 0h1m5 0h3m1 0h2m2 0h1m5 0h3m1 0h3m2 0h2m2 0h3m5 0h3m1 0h3m5 0h1m2 0h1m5 0h1m1 0h2m2 0h3m1 0h2m2 0h1m3 0h1m2 0h1m1 0h1m5 0h3m1 0h3m2 0h3m5 0h1m1 0h1M0 74.5h1m5 0h3m1 0h2m2 0h1m5 0h1m1 0h1m5 0h3m1 0h2m2 0h1m5 0h3m1 0h2m2 0h1m5 0h3m1 0h2m2 0h1m5 0h3m1 0h2m2 0h2m3 0h1m3 0h2m2 0h3m1 0h2m2 0h2m2 0h3m6 0h3m3 0h1m3 0h2m2 0h1m5 0h1m8 0h3m1 0h2m2 0h2m3 0h2m2 0h3m5 0h1M2 75.5h3m1 0h2m2 0h1m5 0h3m5 0h3m1 0h2m2 0h1m5 0h3m1 0h2m2 0h1m5 0h3m1 0h2m2 0h1m5 0h3m1 0h2m2 0h1m3 0h1m2 0h1m3 0h1m1 0h1m3 0h2m2 0h1m3 0h1m3 0h2m2 0h4m1 0h2m2 0h1m3 0h1m1 0h1m5 0h3m3 0h6m1 0h2m2 0h1m3 0h1m2 0h1m1 0h1m3 0h2m2 0h3M0 76.5h1m1 0h2m2 0h1m5 0h3m1 0h2m2 0h3m1 0h2m2 0h1m5 0h3m1 0h2m2 0h1m5 0h3m1 0h2m2 0h1m5 0h3m1 0h2m2 0h1m5 0h1m6 0h1m5 0h1m1 0h1m5 0h1m3 0h1m1 0h1m3 0h3m2 0h1m5 0h1m5 0h3m1 0h2m2 0h1m1 0h5m2 0h1m5 0h1m8 0h1m1 0h1m3 0h2m2 0h2M2 77.5h1m5 0h3m1 0h2m2 0h1m3 0h2m2 0h1m5 0h3m1 0h2m2 0h1m5 0h3m1 0h2m2 0h1m5 0h3m1 0h2m2 0h1m5 0h3m3 0h4m3 0h3m5 0h3m3 0h1m5 0h1m1 0h2m5 0h3m3 0h3m1 0h2m2 0h1m5 0h4m5 0h3m3 0h6m5 0h1m1 0h1m3 0h2M4 78.5h3m1 0h2m2 0h1m5 0h1m1 0h1m5 0h3m1 0h2m2 0h1m5 0h3m1 0h2m2 0h1m5 0h3m1 0h2m2 0h1m5 0h3m1 0h2m2 0h1m1 0h3m2 0h1m1 0h2m2 0h3m1 0h2m2 0h1m3 0h3m3 0h1m2 0h3m1 0h2m2 0h1m1 0h2m2 0h1m5 0h3m1 0h3m2 0h3m1 0h2m2 0h1m1 0h5m2 0h3m5 0h1m1 0h1M0 79.5h3m1 0h2m2 0h1m5 0h3m5 0h3m1 0h2m2 0h1m5 0h3m1 0h2m2 0h1m5 0h3m1 0h2m2 0h1m5 0h3m1 0h2m2 0h1m5 0h2m5 0h1m3 0h2m2 0h1m5 0h1m1 0h2m2 0h1m4 0h2m2 0h1m5 0h1m5 0h3m1 0h2m2 0h2m3 0h2m2 0h1m5 0h4m3 0h2m2 0h3M0 80.5h2m2 0h1m5 0h3m1 0h2m2 0h3m1 0h2m2 0h1m5 0h3m1 0h2m2 0h1m5 0h3m1 0h2m2 0h1m5 0h3m1 0h2m2 0h1m5 0h3m1 0h1m2 0h3m3 0h1m1 0h1m5 0h3m3 0h1m5 0h2m1 0h1m5 0h3m3 0h3m1 0h2m2 0h1m3 0h1m2 0h1m1 0h1m5 0h3m1 0h3m2 0h1m1 0h1m3 0h2m2 0h3M0 81.5h1m5 0h3m1 0h2m2 0h1m3 0h2m2 0h1m5 0h3m1 0h2m2 0h1m5 0h3m1 0h2m2 0h1m5 0h3m1 0h2m2 0h1m5 0h3m1 0h2m5 0h2m2 0h1m5 0h3m1 0h2m2 0h1m3 0h3m1 0h1m4 0h3m1 0h2m2 0h1m1 0h2m2 0h1m5 0h1m8 0h3m1 0h2m2 0h2m7 0h1m1 0h1m3 0h2M2 82.5h3m1 0h2m2 0h1m5 0h1m1 0h1m5 0h3m1 0h2m2 0h1m5 0h3m1 0h2m2 0h1m5 0h3m1 0h2m2 0h1m5 0h3m1 0h2m2 0h1m2 0h3m1 0h1m5 0h3m1 0h2m2 0h1m5 0h1m1 0h2m4 0h2m1 0h2m2 0h1m5 0h1m5 0h3m3 0h6m1 0h2m2 0h1m3 0h1m2 0h5m5 0h1m1 0h1M0 83.5h1m1 0h2m2 0h1m5 0h3m5 0h3m1 0h2m2 0h1m5 0h3m1 0h2m2 0h1m5 0h3m1 0h2m2 0h1m5 0h3m1 0h2m2 0h1m6 0h2m4 0h3m1 0h2m2 0h1m5 0h3m3 0h1m2 0h2m1 0h1m2 0h1m5 0h3m3 0h3m1 0h2m2 0h1m1 0h5m2 0h1m5 0h1m4 0h4m2 0h3m5 0h2"/></pattern>
</defs>
<rect width="1919" height="1080" fill="url(#wg)"/>
<rect width="1919" height="1080" fill="url(#wv)"/>
<rect width="1919" height="1080" fill="url(#r110)"/>
</svg>
<div id="bar">
<span class="bl" style="left:18px">2 4 6 8</span>
<span class="bl" style="left:804px">Janet Jackson - The Pleasure Principle</span>
<span class="dbl" style="left:1050px">2:06 / 4:57</span>
<svg class="abs" style="left:1560px;top:10px" width="150" height="18" viewBox="1560 10 150 18"><g fill="#ff79b0"><rect x="1570.3" y="14.2" width="1.7" height="9.8"/><path d="M1577 14.2v9.8l-5-4.9zM1582.2 14.2v9.8l-5.2-4.9z"/><path d="M1600.4 14.4v9.4l-5.2-4.7zM1605.6 14.4v9.4l-5.2-4.7z"/><rect x="1619.4" y="14.2" width="9.6" height="9"/><path d="M1642.3 13.3v11l9.5-5.5z"/><path d="M1664.8 14.4v9.4l5.2-4.7zM1670 14.4v9.4l5.2-4.7z"/><path d="M1688.3 14.2v9.8l5-4.9zM1693.3 14.2v9.8l5-4.9z"/><rect x="1698.3" y="14.2" width="1.7" height="9.8"/></g></svg>
<span class="pk ob" style="left:1718px">O</span>
<span class="pk ob" style="left:1739.5px">?</span>
<span class="bl" style="left:1770px">82%</span>
<span class="bl" style="left:1811px">2018-02-14 20:27</span>
</div>
<div id="vim">
<div class="vl tg" style="left:2px;top:2px;">&lt;r4a.sh</div>
<svg class="bx" style="left:66px;top:2px" width="8" height="18"><polyline points="0.5,1 7.5,9 0.5,17" fill="none" stroke="#98c379" stroke-width="1.1"/></svg>
<div class="vl tg" style="left:82px;top:2px;">greeter3b.sh</div>
<svg class="bx" style="left:186px;top:2px" width="8" height="18"><polyline points="0.5,1 7.5,9 0.5,17" fill="none" stroke="#98c379" stroke-width="1.1"/></svg>
<div class="vl tg" style="left:202px;top:2px;">greeter4b.sh</div>
<div class="bx" style="left:306px;top:2px;width:80px;background:#98c379"></div>
<svg class="bx" style="left:306px;top:2px" width="8" height="18"><polygon points="0,0 8,9 0,18" fill="#282c34"/></svg>
<div class="vl dk" style="left:322px;top:2px;">back.sh</div>
<svg class="bx" style="left:386px;top:2px" width="8" height="18"><polygon points="0,0 8,9 0,18" fill="#98c379"/></svg>
<div class="vl tg" style="left:402px;top:2px;">greeter2a.sh</div>
<svg class="bx" style="left:506px;top:2px" width="8" height="18"><polyline points="0.5,1 7.5,9 0.5,17" fill="none" stroke="#98c379" stroke-width="1.1"/></svg>
<div class="vl tg" style="left:522px;top:2px;">greeter3a.sh</div>
<svg class="bx" style="left:626px;top:2px" width="8" height="18"><polyline points="0.5,1 7.5,9 0.5,17" fill="none" stroke="#98c379" stroke-width="1.1"/></svg>
<div class="vl tg" style="left:642px;top:2px;">greeter2b.sh</div>
<div class="bx" style="left:746px;top:2px;width:80px;background:#3e4452"></div>
<svg class="bx" style="left:746px;top:2px" width="8" height="18"><polygon points="0,0 8,9 0,18" fill="#282c34"/></svg>
<div class="vl " style="left:762px;top:2px;">test.sh</div>
<svg class="bx" style="left:826px;top:2px" width="8" height="18"><polygon points="0,0 8,9 0,18" fill="#3e4452"/></svg>
<svg class="bx" style="left:842px;top:2px" width="8" height="18"><polygon points="8,0 0,9 8,18" fill="#c678dd"/></svg>
<div class="bx" style="left:850px;top:2px;width:72px;background:#c678dd"></div>
<div class="vl dk" style="left:858px;top:2px;">buffers</div>
<div class="vl" style="top:20px"><span class="n"> 25 </span>assert <span class="c">`</span><span class="p">[[</span> <span class="y">$(</span><span class="b">select_part</span> <span class="g">"aabbccaabbcc"</span> <span class="b">bac</span><span class="y">)</span> <span class="p">=</span> <span class="g">"10 2"</span> <span class="p">]]</span><span class="c">`</span></div>
<div class="vl" style="top:38px"><span class="n"> 26 </span>assert <span class="c">`</span><span class="p">[[</span> <span class="y">$(</span><span class="b">select_part</span> <span class="g">"aabbccaabbcc"</span> <span class="b">cc</span><span class="y">)</span> <span class="p">=</span> <span class="g">"10 2"</span> <span class="p">]]</span><span class="c">`</span></div>
<div class="vl" style="top:56px"><span class="n"> 27 </span></div>
<div class="vl" style="top:74px"><span class="n"> 28 </span><span class="m"># Check moves.</span></div>
<div class="vl" style="top:92px"><span class="n"> 29 </span>assert <span class="c">`</span><span class="p">[[</span> <span class="y">$(</span><span class="b">make_move</span> <span class="g">"aabbaa"</span> <span class="b">b</span><span class="y">)</span> <span class="p">=</span> <span class="g">"aaaacc 2"</span> <span class="p">]]</span><span class="c">`</span></div>
<div class="vl" style="top:110px"><span class="n"> 30 </span>assert <span class="c">`</span><span class="p">[[</span> <span class="y">$(</span><span class="b">make_move</span> <span class="g">"abc"</span> <span class="b">a</span><span class="y">)</span> <span class="p">=</span> <span class="g">"bcb 2"</span> <span class="p">]]</span><span class="c">`</span></div>
<div class="vl" style="top:128px"><span class="n"> 31 </span>assert <span class="c">`</span><span class="p">[[</span> <span class="y">$(</span><span class="b">make_move</span> <span class="g">"aabbcaba"</span> <span class="b">bba</span><span class="y">)</span> <span class="p">=</span> <span class="g">"aabbcabb 8"</span> <span class="p">]]</span><span class="c">`</span></div>
<div class="bx" style="left:2px;top:146px;width:920px;background:#3e4452"></div>
<div class="vl " style="left:10px;top:146px;">test.sh</div>
<div class="vl " style="left:650px;top:146px;">sh</div>
<div class="vl " style="left:690px;top:146px;">[unix]</div>
<svg class="bx" style="left:746px;top:146px" width="8" height="18"><polygon points="8,0 0,9 8,18" fill="#abb2bf"/></svg>
<div class="bx" style="left:754px;top:146px;width:168px;background:#abb2bf"></div>
<div class="vl dk" style="left:770px;top:146px;">96%</div>
<div class="lnsym dk" style="left:802px;top:146px"><i>L</i><b>N</b></div>
<div class="vl dk" style="left:826px;top:146px;">31/32</div>
<div class="vl dk sym tri" style="left:866px;top:146px;">☰</div>
<div class="vl dk" style="left:882px;top:146px;">:</div>
<div class="vl dk" style="left:898px;top:146px;">57</div>
<div class="bx" style="left:506px;top:506px;width:8px;background:#61afef"></div>
<div class="vl" style="top:164px"><span class="n">116 </span>        mission_arr<span class="p">[</span><span class="y">$n</span><span class="p">]=</span><span class="y">$goal</span></div>
<div class="vl" style="top:182px"><span class="n">117 </span>        mission_arr<span class="p">[</span><span class="y">$n+1</span><span class="p">]=</span><span class="y">$score</span></div>
<div class="vl" style="top:200px"><span class="n">118 </span>        <span class="r">n</span>=<span class="y">$n+</span><span class="o">2</span></div>
<div class="vl" style="top:218px"><span class="n">119 </span>    <span class="p">done</span> <span class="p">&lt;</span> <span class="y">$1</span></div>
<div class="vl" style="top:236px"><span class="n">120 </span><span class="b">}</span></div>
<div class="vl" style="top:254px"><span class="n">121 </span></div>
<div class="vl" style="top:272px"><span class="n">122 </span><span class="m"># Arguments: a start string and a start budget.</span></div>
<div class="vl" style="top:290px"><span class="n">123 </span><span class="b">function run_mission()</span></div>
<div class="vl" style="top:308px"><span class="n">124 </span><span class="b">{</span></div>
<div class="vl" style="top:326px"><span class="n">125 </span>    <span class="r">current_str</span>=<span class="y">$1</span></div>
<div class="vl" style="top:344px"><span class="n">126 </span>    <span class="r">budget</span>=<span class="y">$2</span></div>
<div class="vl" style="top:362px"><span class="n">127 </span>    <span class="p">echo</span> <span class="g">"Current string: </span><span class="y">$current_str</span><span class="g"> (budget </span><span class="y">$budget</span><span class="g">)"</span></div>
<div class="vl" style="top:380px"><span class="n">128 </span>    <span class="p">while</span> <span class="p">read</span> <span class="b">-ep</span> <span class="g">"Selector: "</span> <span class="p">line; do</span></div>
<div class="vl" style="top:398px"><span class="n">129 </span>        <span class="p">if</span> [[ <span class="y">$line</span> <span class="p">=</span> <span class="g">"quit"</span> ]]<span class="p">;</span> <span class="p">then</span></div>
<div class="vl" style="top:416px"><span class="n">130 </span>            <span class="p">return</span></div>
<div class="vl" style="top:434px"><span class="n">131 </span>        <span class="p">fi</span></div>
<div class="vl" style="top:452px"><span class="n">132 </span>        <span class="p">read</span> <span class="p">-e</span> result cost <span class="p">&lt;&lt;&lt;</span> <span class="c">`</span><span class="b">make_move</span> <span class="y">$current_str</span> <span class="y">$line</span><span class="c">`</span></div>
<div class="vl" style="top:470px"><span class="n">133 </span>        <span class="r">current_str</span>=<span class="y">$result</span></div>
<div class="vl" style="top:488px"><span class="n">134 </span>        <span class="r">budget</span>=<span class="y">$[$budget-$cost]</span></div>
<div class="vl" style="top:506px"><span class="n">135 </span>        <span class="p">echo</span> <span class="g">"Current string: </span><span class="y">$current_str</span><span class="g"> (budget </span><span class="y">$budget</span><span class="g">)</span><span class="cur">"</span></div>
<div class="vl" style="top:524px"><span class="n">136 </span>    <span class="p">done</span></div>
<div class="vl" style="top:542px"><span class="n">137 </span><span class="b">}</span></div>
<div class="vl" style="top:560px"><span class="n">138 </span></div>
<div class="vl" style="top:578px"><span class="n">139 </span><span class="b">function back()</span></div>
<div class="vl" style="top:596px"><span class="n">140 </span><span class="b">{</span></div>
<div class="vl" style="top:614px"><span class="n">141 </span>    <span class="r">mission_file</span>=<span class="y">$1</span></div>
<div class="vl" style="top:632px"><span class="n">142 </span></div>
<div class="vl" style="top:650px"><span class="n">143 </span>    <span class="p">if</span> <span class="p">[</span> <span class="p">!</span> <span class="p">-f</span> <span class="g">"</span><span class="y">$mission_file</span><span class="g">"</span> <span class="p">];</span> <span class="p">then</span></div>
<div class="vl" style="top:668px"><span class="n">144 </span>        <span class="p">echo</span> <span class="g">"Mission file '</span><span class="y">$mission_file</span><span class="g">' does not exist."</span></div>
<div class="vl" style="top:686px"><span class="n">145 </span>        <span class="p">return</span></div>
<div class="vl" style="top:704px"><span class="n">146 </span>    <span class="p">fi</span></div>
<div class="vl" style="top:722px"><span class="n">147 </span></div>
<div class="vl" style="top:740px"><span class="n">148 </span>    read_mission_file <span class="y">$mission_file</span></div>
<div class="vl" style="top:758px"><span class="n">149 </span>    <span class="r">start_str</span>=<span class="y">${</span>mission_arr[0]<span class="y">}</span></div>
<div class="vl" style="top:776px"><span class="n">150 </span>    <span class="r">start_budget</span>=<span class="y">${</span>mission_arr[1]<span class="y">}</span></div>
<div class="vl" style="top:794px"><span class="n">151 </span></div>
<div class="vl" style="top:812px"><span class="n">152 </span>    run_mission <span class="y">$start_str</span> <span class="y">$start_budget</span></div>
<div class="vl" style="top:830px"><span class="n">153 </span><span class="b">}</span></div>
<div class="vl" style="top:848px"><span class="til">~</span></div>
<div class="vl" style="top:866px"><span class="til">~</span></div>
<div class="vl" style="top:884px"><span class="til">~</span></div>
<div class="vl" style="top:902px"><span class="til">~</span></div>
<div class="vl" style="top:920px"><span class="til">~</span></div>
<div class="vl" style="top:938px"><span class="til">~</span></div>
<div class="bx" style="left:2px;top:956px;width:64px;background:#98c379"></div>
<div class="vl dk bd" style="left:10px;top:956px;">NORMAL</div>
<div class="bx" style="left:66px;top:956px;width:168px;background:#3e4452"></div>
<svg class="bx" style="left:66px;top:956px" width="8" height="18"><polygon points="0,0 8,9 0,18" fill="#98c379"/></svg>
<div class="vl " style="left:82px;top:956px;">+0 ~0 -0</div>
<svg class="bx" style="left:154px;top:956px" width="8" height="18" viewBox="0 0 8 18"><g fill="none" stroke="#abb2bf" stroke-width="1.7"><path d="M1.5 1v16"/><path d="M1.6 14.5c0-3 4-3 4-7.5V4"/><path d="M3.6 6l2-2.3 2 2.3"/></g></svg>
<div class="vl " style="left:170px;top:956px;">master</div>
<div class="vl sym" style="left:218px;top:956px;">∄</div>
<svg class="bx" style="left:234px;top:956px" width="8" height="18"><polygon points="0,0 8,9 0,18" fill="#3e4452"/></svg>
<div class="vl tg" style="left:250px;top:956px;">back.sh</div>
<div class="vl tg" style="left:634px;top:956px;">sh</div>
<svg class="bx" style="left:658px;top:956px" width="8" height="18"><polygon points="8,0 0,9 8,18" fill="#3e4452"/></svg>
<div class="bx" style="left:666px;top:956px;width:64px;background:#3e4452"></div>
<div class="vl " style="left:674px;top:956px;">[unix]</div>
<svg class="bx" style="left:730px;top:956px" width="8" height="18"><rect width="8" height="18" fill="#3e4452"/><polygon points="8,0 0,9 8,18" fill="#98c379"/></svg>
<div class="bx" style="left:738px;top:956px;width:184px;background:#98c379"></div>
<div class="vl dk" style="left:754px;top:956px;">88%</div>
<div class="lnsym dk" style="left:786px;top:956px"><i>L</i><b>N</b></div>
<div class="vl dk bd" style="left:802px;top:956px;">135/153</div>
<div class="vl dk sym tri" style="left:858px;top:956px;">☰</div>
<div class="vl dk" style="left:874px;top:956px;">:</div>
<div class="vl dk" style="left:890px;top:956px;">60</div>
<svg class="bx" style="left:914px;top:956px" width="8" height="18"><polygon points="8,0 0,9 8,18" fill="#e5c07b"/></svg>
</div>
<div id="ff">
<div class="tabs">
<div class="tab" style="left:0px"><svg class="fav" viewBox="0 0 16 16"><path d="M0.9 11.4v4.1h11.4v-4.1" fill="none" stroke="#a4a4a4" stroke-width="1.1"/><g stroke="#d97a18" stroke-width="1.15"><path d="M3.3 13.2h6.6"/><path d="M3.4 10.7l6.5.8"/><path d="M4.1 8.1l6.1 2.1"/><path d="M5.6 5.4l5.3 3.6"/><path d="M7.9 2.6l4.2 5.2"/></g></svg><span class="tt fd">How to perform a</span><svg class="tx" viewBox="0 0 10 10"><path d="M0.6 0.6l8.8 8.8M9.4 0.6L0.6 9.4" stroke="#c4c4c4" stroke-width="1.5" fill="none"/></svg></div>
<div class="tab" style="left:150px"><svg class="fav" viewBox="0 0 16 16"><rect x="0" y="0.5" width="15.5" height="15" fill="#d6d6d6"/><rect x="0" y="0.5" width="15.5" height="3" fill="#2f86d6"/><rect x="0" y="13.5" width="15.5" height="2" fill="#ececec"/><rect x="0" y="4.5" width="2" height="7" fill="#e0824a"/><rect x="13.3" y="4.5" width="2.2" height="4" fill="#8cc152"/><rect x="3" y="5" width="9.5" height="7.5" fill="#c8c8c8"/></svg><span class="tt fd">Manipulating Strin</span><svg class="tx" viewBox="0 0 10 10"><path d="M0.6 0.6l8.8 8.8M9.4 0.6L0.6 9.4" stroke="#c4c4c4" stroke-width="1.5" fill="none"/></svg></div>
<div class="tab" style="left:300px"><svg class="fav" viewBox="0 0 16 16"><path d="M0.9 11.4v4.1h11.4v-4.1" fill="none" stroke="#a4a4a4" stroke-width="1.1"/><g stroke="#d97a18" stroke-width="1.15"><path d="M3.3 13.2h6.6"/><path d="M3.4 10.7l6.5.8"/><path d="M4.1 8.1l6.1 2.1"/><path d="M5.6 5.4l5.3 3.6"/><path d="M7.9 2.6l4.2 5.2"/></g></svg><span class="tt fd">bash - How can I</span><svg class="tx" viewBox="0 0 10 10"><path d="M0.6 0.6l8.8 8.8M9.4 0.6L0.6 9.4" stroke="#c4c4c4" stroke-width="1.5" fill="none"/></svg></div>
<div class="tab" style="left:450px"><svg class="fav" viewBox="0 0 16 16"><path d="M3 3c2-2 3 0 5 1 2-1 3-3 5-1 1 2 0 4-1 5-1 3-2 5-4 6-2-1-3-3-4-6C3 7 2 5 3 3z" fill="none" stroke="#1c1c1c" stroke-width="1.2"/></svg><span class="tt fd">Bash Reference Ma</span><svg class="tx" viewBox="0 0 10 10"><path d="M0.6 0.6l8.8 8.8M9.4 0.6L0.6 9.4" stroke="#c4c4c4" stroke-width="1.5" fill="none"/></svg></div>
<div class="tab act" style="left:600px"><svg class="fav" viewBox="0 0 16 16"><rect x="0" y="0.5" width="15.5" height="15" fill="#d6d6d6"/><rect x="0" y="0.5" width="15.5" height="3" fill="#2f86d6"/><rect x="0" y="13.5" width="15.5" height="2" fill="#ececec"/><rect x="0" y="4.5" width="2" height="7" fill="#e0824a"/><rect x="13.3" y="4.5" width="2.2" height="4" fill="#8cc152"/><rect x="3" y="5" width="9.5" height="7.5" fill="#c8c8c8"/></svg><span class="tt">Array variables</span><svg class="tx" viewBox="0 0 10 10"><path d="M0.6 0.6l8.8 8.8M9.4 0.6L0.6 9.4" stroke="#c4c4c4" stroke-width="1.5" fill="none"/></svg></div>
<div class="tab" style="left:750px"><svg class="fav" viewBox="0 0 16 16"><circle cx="8" cy="8" r="6.6" fill="none" stroke="#cf3a2c" stroke-width="2.3" stroke-dasharray="3.6 1.58"/></svg><span class="tt">Dashboard</span><svg class="tx" viewBox="0 0 10 10"><path d="M0.6 0.6l8.8 8.8M9.4 0.6L0.6 9.4" stroke="#c4c4c4" stroke-width="1.5" fill="none"/></svg></div>
<i class="tsep" style="left:149px"></i>
<i class="tsep" style="left:299px"></i>
<i class="tsep" style="left:449px"></i>
<i class="tsep" style="left:899px"></i>
<svg class="abs" style="left:908px;top:7px" width="14" height="14" viewBox="0 0 14 14"><path d="M7 0v14M0 7h14" stroke="#bdbdbd" stroke-width="1.9"/></svg>
</div>
<div class="nav">
<svg class="abs" style="left:6px;top:8px" width="18" height="16" viewBox="0 0 18 16"><path d="M17 8H2M8 1.3L1.6 8 8 14.7" fill="none" stroke="#b1b1b3" stroke-width="2"/></svg>
<svg class="abs" style="left:36px;top:8px" width="18" height="16" viewBox="0 0 18 16"><path d="M1 8h15M10 1.3L16.4 8 10 14.7" fill="none" stroke="#5e5e60" stroke-width="2"/></svg>
<svg class="abs" style="left:67px;top:7px" width="18" height="18" viewBox="0 0 18 18"><path d="M14.6 9.8A6.2 6.2 0 1 1 12.3 4.4" fill="none" stroke="#b1b1b3" stroke-width="2"/><path d="M15.7 1.2v6.2H9.5z" fill="#b1b1b3"/></svg>
<svg class="abs" style="left:96px;top:7px" width="18" height="18" viewBox="0 0 18 18"><path d="M1 9.2L9 1.4l8 7.8" fill="none" stroke="#b1b1b3" stroke-width="2"/><path d="M3.4 8.5v7.7h11.2V8.5" fill="none" stroke="#b1b1b3" stroke-width="2.2"/><rect x="7.3" y="10" width="3.4" height="5.5" fill="#b1b1b3"/><rect x="8.6" y="12" width="1" height="1.2" fill="#28282a"/></svg>
<div class="ubar" style="left:126px;width:468px">
<svg class="abs" style="left:8px;top:4px" width="16" height="16" viewBox="0 0 16 16"><circle cx="8" cy="8" r="6.9" fill="none" stroke="#a4a4a6" stroke-width="1"/><rect x="7.1" y="6.8" width="1.8" height="5" fill="#a4a4a6"/><rect x="7.1" y="3.6" width="1.8" height="1.9" fill="#a4a4a6"/></svg>
<span class="ut"><b>tldp.org</b>/LDP/Bash-Beginners-Guide/html/sect_10_02.html</span>
<svg class="abs" style="left:363px;top:3px" width="16" height="18" viewBox="0 0 16 18"><rect x="1.2" y="1.4" width="12.8" height="15.2" rx="1.6" fill="none" stroke="#9a9a9c" stroke-width="1.5"/><path d="M4.2 5.2h6.8M4.2 7.4h6.8M4.2 9.6h6.8M4.2 11.8h3.4" stroke="#9a9a9c" stroke-width="0.9"/></svg>
<i class="abs" style="left:388.5px;top:3px;width:1px;height:18px;background:#4a5666"></i>
<svg class="abs" style="left:399px;top:9px" width="18" height="6" viewBox="0 0 18 6"><circle cx="3" cy="3" r="2.1" fill="#a6a6a8"/><circle cx="9" cy="3" r="2.1" fill="#a6a6a8"/><circle cx="15" cy="3" r="2.1" fill="#a6a6a8"/></svg>
<svg class="abs" style="left:423px;top:4px" width="18" height="16" viewBox="0 0 18 16"><path d="M1 1.6h16v5.6a8 7.4 0 0 1-16 0z" fill="#a2a2a4"/><path d="M5 5.6l4 3.8 4-3.8" fill="none" stroke="#39393b" stroke-width="1.7"/></svg>
<svg class="abs" style="left:447px;top:3px" width="18" height="18" viewBox="0 0 18 18"><path d="M9 1.8l2.2 4.9 5.3.5-4 3.5 1.2 5.2L9 13.1l-4.7 2.8 1.2-5.2-4-3.5 5.3-.5z" fill="none" stroke="#9c9c9e" stroke-width="1.5" stroke-linejoin="round"/></svg>
</div>
<div class="ubar" style="left:606px;width:138px">
<svg class="abs" style="left:6px;top:3px" width="20" height="20" viewBox="0 0 20 20"><circle cx="7.8" cy="7.8" r="5.3" fill="none" stroke="#7c7c7e" stroke-width="1.6"/><path d="M11.6 11.6l6 6" stroke="#7c7c7e" stroke-width="1.6"/></svg>
<span class="ut" style="left:31.5px;color:#c6c6c8">privacy badget</span>
<svg class="abs" style="left:117px;top:4px" width="18" height="16" viewBox="0 0 18 16"><path d="M1 8h15M9.6 1.3L16 8l-6.4 6.7" fill="none" stroke="#a2a2a4" stroke-width="2"/></svg>
</div>
<svg class="abs" style="left:757px;top:8px" width="16" height="16" viewBox="0 0 16 16"><path d="M1.4 14.6l7-7" stroke="#949496" stroke-width="2.2"/><path d="M13.8 2.2a4 4 0 1 0 .9 3.6l-2.6.3-1.3-1.6z" fill="#949496"/></svg>
<svg class="abs" style="left:787px;top:7px" width="16" height="18" viewBox="0 0 16 18"><path d="M8 1l6.6 2.2v5.6c0 4-3.4 6.8-6.6 8.2C4.8 15.6 1.4 12.800 1.400 8.800V3.200z" fill="#7a0404" stroke="#5c1414" stroke-width="0.8"/><text x="8" y="11" font-family="Liberation Sans,sans-serif" font-size="6.5" font-weight="bold" fill="#ededed" text-anchor="middle">uo</text></svg>
<svg class="abs" style="left:816px;top:8px" width="18" height="16" viewBox="0 0 18 16"><rect x="1.6" y="2" width="14.8" height="12.200" rx="2" fill="none" stroke="#a0a0a2" stroke-width="1.800"/><path d="M8 2v12.200" stroke="#a0a0a2" stroke-width="1.500"/><path d="M3.800 4.800h2.200M3.800 6.800h2.200M3.800 8.800h2.200" stroke="#a0a0a2" stroke-width="0.900"/></svg>
<svg class="abs" style="left:847px;top:7px" width="17" height="17" viewBox="0 0 17 17"><path d="M8.5 0.5l1.600 2 1.800-0.600-0.500 1.500" fill="#8a4a10"/><circle cx="1.900" cy="8.600" r="1.800" fill="#a8641c"/><circle cx="15.100" cy="8.600" r="1.800" fill="#a8641c"/><ellipse cx="8.500" cy="9" rx="6.700" ry="7" fill="#99540f"/><ellipse cx="8.500" cy="11.300" rx="5.300" ry="4.300" fill="#d8a868"/><ellipse cx="6.300" cy="8" rx="1.900" ry="2.300" fill="#d8a868"/><ellipse cx="10.700" cy="8" rx="1.900" ry="2.300" fill="#d8a868"/><ellipse cx="6.400" cy="8.400" rx="0.800" ry="1.300" fill="#1c4a1c"/><ellipse cx="10.600" cy="8.400" rx="0.800" ry="1.300" fill="#1c4a1c"/><path d="M5 12.300q3.500 2.200 7 0" fill="none" stroke="#7a2c1c" stroke-width="0.900"/></svg>
<svg class="abs" style="left:876px;top:9px" width="18" height="15" viewBox="0 0 18 15"><path d="M1 9.500L8.500 1l4 2.500L16.500 10 14 13.500 4.500 14z" fill="#d8d8d8" stroke="#b87a4c" stroke-width="0.800"/><path d="M2.500 9.500l6-6.500 2 1.500-6 6.500z" fill="#2c2c2c"/><path d="M3 12.500l11-1" stroke="#8c8c8c" stroke-width="1"/></svg>
<div class="badge">0</div>
<svg class="abs" style="left:908px;top:10px" width="14" height="12" viewBox="0 0 14 12"><path d="M0.500 1.200h13M0.500 6h13M0.500 10.800h13" stroke="#b6b6b8" stroke-width="1.900"/></svg>
</div>
<div class="page">
<div class="sb"><i></i></div>
<div class="ln t" style="left:0px;top:68.6px;width:918px;text-align:center"><b>Bash Guide for Beginners</b></div>
<div class="ln t" style="left:8px;top:87.6px;"><a>Prev</a></div>
<div class="ln t" style="left:0px;top:87.6px;width:918px;text-align:center">Chapter 10. More on variables</div>
<div class="ln t" style="left:0px;top:87.6px;width:910px;text-align:right"><a>Next</a></div>
<i class="hr"></i>
<div class="ln h1 f0" style="left:8px;top:138.7px;letter-spacing:0.362px;">10.2. Array variables</div>
<div class="ln h2 f1" style="left:8px;top:198.0px;letter-spacing:0.137px;">10.2.1. Creating arrays</div>
<div class="ln t f2" style="left:8px;top:247.6px;letter-spacing:0.154px;">An array is a variable containing multiple values. Any variable may be used as an array. There is no maximum limit to the size of an</div>
<div class="ln t f3" style="left:8px;top:267.6px;letter-spacing:0.133px;">array, nor any requirement that member variables be indexed or assigned contiguously. Arrays are zero-based: the first element is indexed</div>
<div class="ln t f4" style="left:8px;top:287.6px;letter-spacing:0.101px;">with the number 0.</div>
<div class="ln t f5" style="left:8px;top:324.6px;letter-spacing:0.109px;">Indirect declaration is done using the following syntax to declare a variable:</div>
<div class="ln t f6" style="left:8px;top:360.6px;letter-spacing:0.272px;"><b class="mo">ARRAY[INDEXNR]=</b><b>value</b></div>
<div class="ln t f7" style="left:8px;top:394.6px;letter-spacing:0.139px;">The <i>INDEXNR</i> is treated as an arithmetic expression that must evaluate to a positive number.</div>
<div class="ln t f8" style="left:8px;top:431.6px;letter-spacing:0.115px;">Explicit declaration of an array is done using the <b>declare</b> built-in:</div>
<div class="ln t f9" style="left:8px;top:466.6px;letter-spacing:0.004px;"><b>declare</b> <b class="mo">-a ARRAYNAME</b></div>
<div class="ln t f10" style="left:8px;top:501.6px;letter-spacing:0.155px;">A declaration with an index number will also be accepted, but the index number will be ignored. Attributes to the array may be specified</div>
<div class="ln t f11" style="left:8px;top:521.6px;letter-spacing:0.117px;">using the <b>declare</b> and <b>readonly</b> built-ins. Attributes apply to all variables in the array; you can't have mixed arrays.</div>
<div class="ln t f12" style="left:8px;top:558.6px;letter-spacing:0.103px;">Array variables may also be created using compound assignments in this format:</div>
<div class="ln t f13" style="left:8px;top:595.1px;letter-spacing:0.275px;"><b class="mo">ARRAY=</b><b>(value1 value2 ... valueN)</b></div>
<div class="ln t f14" style="left:8px;top:628.6px;letter-spacing:0.109px;">Each value is then in the form of <i>[indexnumber=]string</i>. The index number is optional. If it is supplied, that index is assigned to it;</div>
<div class="ln t f15" style="left:8px;top:649.6px;letter-spacing:0.102px;">otherwise the index of the element assigned is the number of the last index that was assigned, plus one. This format is accepted by <b>declare</b></div>
<div class="ln t f16" style="left:8px;top:670.1px;letter-spacing:0.093px;">as well. If no index numbers are supplied, indexing starts at zero.</div>
<div class="ln t f17" style="left:8px;top:706.2px;letter-spacing:0.092px;">Adding missing or extra members in an array is done using the syntax:</div>
<div class="ln t f18" style="left:8px;top:742.1px;letter-spacing:0.312px;"><b class="mo">ARRAYNAME[indexnumber]=</b><b>value</b></div>
<div class="ln t f19" style="left:8px;top:776.6px;letter-spacing:0.143px;">Remember that the <b>read</b> built-in provides the <span class="mo">-a</span> option, which allows for reading and assigning values for member variables of an array.</div>
<div class="ln h2 f20" style="left:8px;top:814.6px;letter-spacing:0.230px;">10.2.2. Dereferencing the variables in an array</div>
<div class="ln t f21" style="left:8px;top:863.6px;letter-spacing:0.133px;">In order to refer to the content of an item in an array, use curly braces. This is necessary, as you can see from the following example, to</div>
<div class="ln t f22" style="left:8px;top:884.1px;letter-spacing:0.126px;">bypass the shell interpretation of expansion operators. If the index number is @ or *, all members of an array are referenced.</div>
<div class="preb"></div>
<div class="ln pre" style="left:12px;top:934.2px;">[bob in ~] <b>ARRAY=<i>(one two three)</i></b></div>
<div class="ln pre" style="left:12px;top:962.2px;">[bob in ~] <b>echo ${ARRAY[*]}</b></div>
<div class="ln pre" style="left:12px;top:976.2px;">one two three</div>
</div>
</div>
<div id="term">
<div class="tl" style="top:0"><span class="tg2">sam@peacelily</span> <span class="tb2">~/Documents/School/proglang/bash $</span> <span class="tw2">back example.mission</span></div>
<div class="tl" style="top:19px">Current string: aabbcc (budget 10)</div>
<div class="tl" style="top:38px">Selector: c</div>
<div class="tl" style="top:57px">Current string: aabbaa (budget 8)</div>
<div class="tl" style="top:76px">Selector: a</div>
<div class="tl" style="top:95px">Current string: bbaabb (budget 6)</div>
<div class="tl" style="top:114px">Selector: b</div>
<div class="tl" style="top:133px">Current string: aabbcc (budget 4)</div>
<div class="tl" style="top:152px">Selector: </div>
<i class="tcur"></i>
</div>

</body>
</html>
